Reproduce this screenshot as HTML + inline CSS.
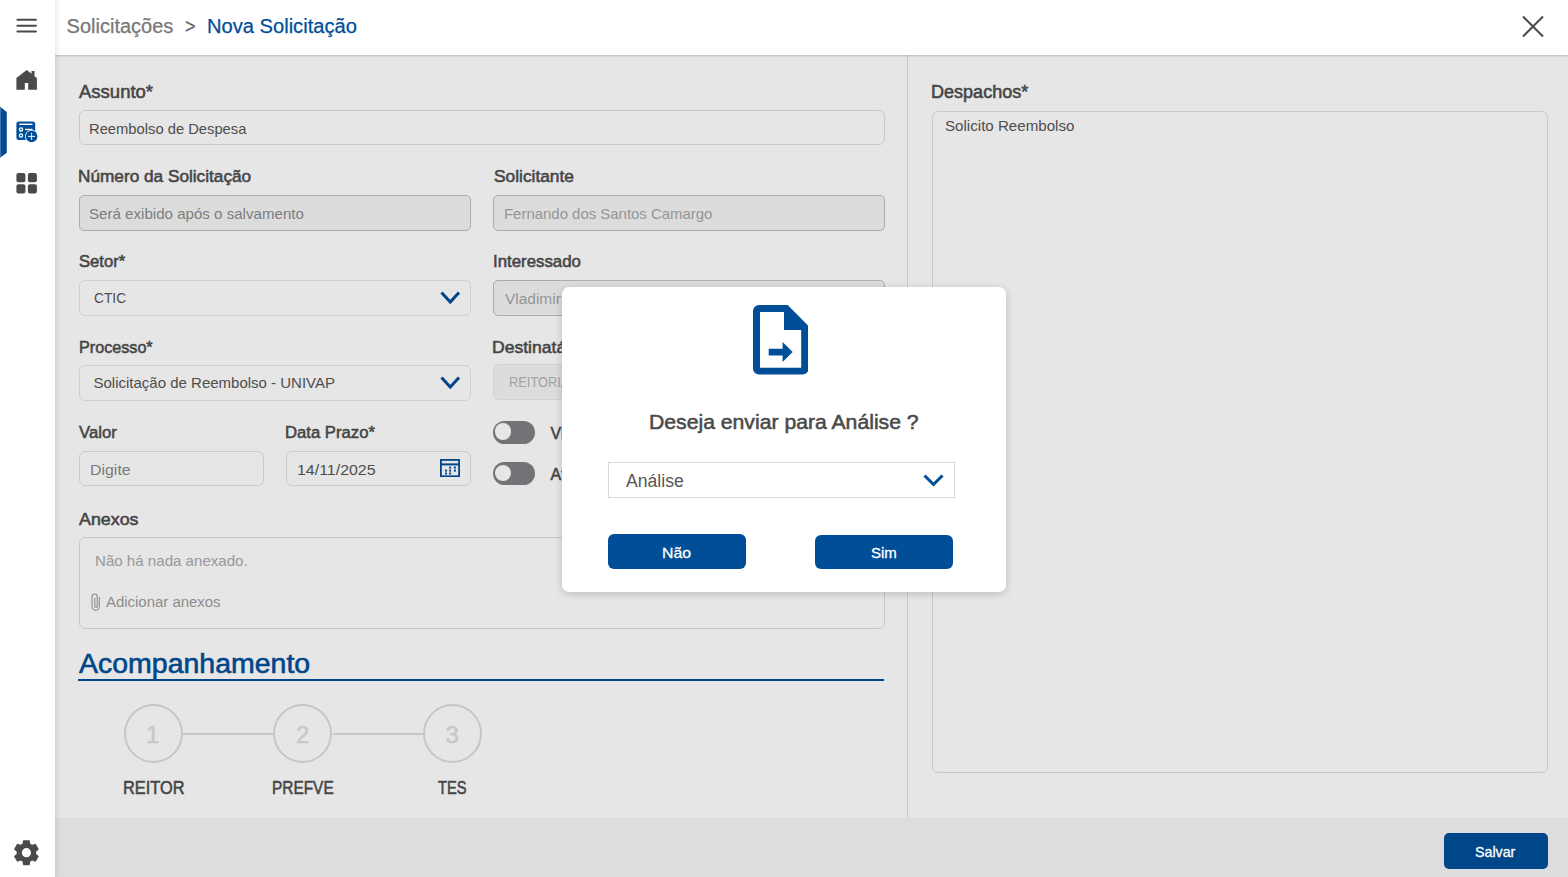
<!DOCTYPE html>
<html><head><meta charset="utf-8"><title>Nova Solicitação</title>
<style>
html,body{margin:0;padding:0;width:1568px;height:877px;overflow:hidden;background:#e6e6e6;}
body{position:relative;font-family:"Liberation Sans",sans-serif;}
.t{position:absolute;white-space:nowrap;transform-origin:0 0;}
.r{position:absolute;}
</style></head><body>
<div class="r" style="left:55px;top:55px;width:1513px;height:763px;background:#e6e6e6;"></div>
<div class="r" style="left:55px;top:818px;width:1513px;height:59px;background:#dddde0;"></div>
<div class="r" style="left:907px;top:54px;width:1.2px;height:764px;background:#cbcbcb;"></div>
<div class="r" style="left:55px;top:0px;width:1513px;height:55px;background:#fff;box-shadow:0 1px 2px rgba(0,0,0,.2);z-index:2;"></div>
<div class="r" style="left:0px;top:0px;width:55px;height:877px;background:#fff;box-shadow:1px 0 6px rgba(0,0,0,.12);z-index:3;"></div>
<div class="t" style="left:66.60px;top:14px;font-size:20px;line-height:24px;font-weight:400;color:#777;z-index:4;-webkit-text-stroke:0.25px #777;">Solicitações</div>
<div class="t" style="left:185.10px;top:14px;font-size:20px;line-height:24px;font-weight:400;color:#666;transform:scaleX(0.9000);z-index:4;-webkit-text-stroke:0.25px #666;">&gt;</div>
<div class="t" style="left:206.69px;top:14px;font-size:20px;line-height:24px;font-weight:400;color:#004e98;transform:scaleX(1.0061);z-index:4;-webkit-text-stroke:0.25px #004e98;">Nova Solicitação</div>
<svg class="r" style="left:1520px;top:14px;z-index:4" width="26" height="25" viewBox="0 0 26 25"><path d="M3 2.5 L23 22.5 M23 2.5 L3 22.5" stroke="#4a4a4a" stroke-width="2" fill="none"/></svg>
<svg class="r" style="left:0;top:0;z-index:5" width="55" height="877" viewBox="0 0 55 877"><g fill="#4a4a4a"><rect x="16.4" y="18.8" width="20.5" height="2" rx="1"/><rect x="16.4" y="24.7" width="20.5" height="2" rx="1"/><rect x="16.4" y="30.6" width="20.5" height="2" rx="1"/><path d="M26.7 69.9 L16.4 78.1 V89.8 H24.8 V82.9 H28.2 V89.8 H36.9 V78.1 L34.5 76.2 V71 H31.5 V73.8 Z"/><rect x="16.4" y="173" width="9" height="9.2" rx="2"/><rect x="27.9" y="173" width="9" height="9.2" rx="2"/><rect x="16.4" y="184.3" width="9" height="9.2" rx="2"/><rect x="27.9" y="184.3" width="9" height="9.2" rx="2"/></g><path d="M0 106.8 L6.8 112 V152.7 L0 157.8 Z" fill="#004a93"/><path d="M0 106.8 L1 107.5 V157.1 L0 157.8 Z" fill="#4573ad"/><g><clipPath id="fc"><rect x="16.4" y="121.5" width="18.8" height="18.5" rx="2.5"/></clipPath><rect x="16.4" y="121.5" width="18.8" height="18.5" rx="2.5" fill="#004e98"/><rect x="19.3" y="123.6" width="13.2" height="1.4" fill="#fff"/><circle cx="21" cy="129.4" r="1.6" fill="none" stroke="#fff" stroke-width="1.3"/><circle cx="21" cy="135.5" r="1.6" fill="none" stroke="#fff" stroke-width="1.3"/><rect x="25" y="128.8" width="7.5" height="1.3" fill="#fff"/><circle cx="31.6" cy="136.4" r="6.6" fill="#fff" clip-path="url(#fc)"/><circle cx="31.6" cy="136.4" r="5.8" fill="#004e98"/><path d="M31.6 132.8 V140 M28 136.4 H35.2" stroke="#fff" stroke-width="0.9"/></g><path fill="#4a4a4a" fill-rule="evenodd" d="M22.47 843.83 L23.20 840.20 L29.60 840.20 L30.33 843.83 A9.70 9.70 0 0 1 32.11 844.86 L35.62 843.68 L38.82 849.22 L36.05 851.67 A9.70 9.70 0 0 1 36.05 853.73 L38.82 856.18 L35.62 861.72 L32.11 860.54 A9.70 9.70 0 0 1 30.33 861.57 L29.60 865.20 L23.20 865.20 L22.47 861.57 A9.70 9.70 0 0 1 20.69 860.54 L17.18 861.72 L13.98 856.18 L16.75 853.73 A9.70 9.70 0 0 1 16.75 851.67 L13.98 849.22 L17.18 843.68 L20.69 844.86 A9.70 9.70 0 0 1 22.47 843.83 Z M26.40 848.10 A4.6 4.6 0 1 0 26.40 857.30 A4.6 4.6 0 1 0 26.40 848.10 Z"/></svg>
<div class="t" style="left:78.90px;top:81px;font-size:18px;line-height:22px;font-weight:400;color:#454545;transform:scaleX(1.0278);-webkit-text-stroke:0.55px #454545;">Assunto*</div>
<div class="r" style="left:79px;top:110px;width:806px;height:35px;border:1px solid #c9c9c9;border-radius:6px;box-sizing:border-box;"></div>
<div class="t" style="left:89.42px;top:120px;font-size:15px;line-height:18px;font-weight:400;color:#4d4d4d;transform:scaleX(0.9830);">Reembolso de Despesa</div>
<div class="t" style="left:78.19px;top:167px;font-size:17px;line-height:20px;font-weight:400;color:#454545;transform:scaleX(1.0124);-webkit-text-stroke:0.55px #454545;">Número da Solicitação</div>
<div class="r" style="left:79px;top:195px;width:392px;height:35.5px;border:1.5px solid #ababab;border-radius:5px;background:#dcdcdc;box-sizing:border-box;"></div>
<div class="t" style="left:89.19px;top:205px;font-size:15px;line-height:18px;font-weight:400;color:#7d7d7d;transform:scaleX(1.0066);">Será exibido após o salvamento</div>
<div class="t" style="left:493.50px;top:167px;font-size:17px;line-height:20px;font-weight:400;color:#454545;transform:scaleX(1.0192);-webkit-text-stroke:0.55px #454545;">Solicitante</div>
<div class="r" style="left:493px;top:195px;width:392px;height:35.5px;border:1.5px solid #ababab;border-radius:5px;background:#dcdcdc;box-sizing:border-box;"></div>
<div class="t" style="left:503.80px;top:205px;font-size:15px;line-height:18px;font-weight:400;color:#959595;transform:scaleX(0.9957);">Fernando dos Santos Camargo</div>
<div class="t" style="left:79.00px;top:252px;font-size:17px;line-height:20px;font-weight:400;color:#454545;transform:scaleX(0.9771);-webkit-text-stroke:0.55px #454545;">Setor*</div>
<div class="r" style="left:79px;top:280px;width:392px;height:36px;border:1px solid #cfcfcf;border-radius:6px;box-sizing:border-box;"></div>
<div class="t" style="left:93.78px;top:289px;font-size:15px;line-height:18px;font-weight:400;color:#4d4d4d;transform:scaleX(0.9182);">CTIC</div>
<svg class="r" style="left:438px;top:289px" width="24.5" height="16.5"><path d="M3.5 3.5 L12.25 13.0 L21.0 3.5" stroke="#004689" stroke-width="3" fill="none" stroke-linecap="butt"/></svg>
<div class="t" style="left:492.51px;top:252px;font-size:17px;line-height:20px;font-weight:400;color:#454545;transform:scaleX(0.9898);-webkit-text-stroke:0.55px #454545;">Interessado</div>
<div class="r" style="left:493px;top:280px;width:392px;height:35.5px;border:1.5px solid #ababab;border-radius:5px;background:#dcdcdc;box-sizing:border-box;"></div>
<div class="t" style="left:504.80px;top:290px;font-size:15px;line-height:18px;font-weight:400;color:#959595;transform:scaleX(1.0296);">Vladimir</div>
<div class="t" style="left:78.95px;top:338px;font-size:17px;line-height:20px;font-weight:400;color:#454545;transform:scaleX(0.9506);-webkit-text-stroke:0.55px #454545;">Processo*</div>
<div class="r" style="left:79px;top:365px;width:392px;height:36px;border:1px solid #cfcfcf;border-radius:6px;box-sizing:border-box;"></div>
<div class="t" style="left:93.50px;top:374px;font-size:15px;line-height:18px;font-weight:400;color:#4d4d4d;">Solicitação de Reembolso - UNIVAP</div>
<svg class="r" style="left:438px;top:374px" width="24.5" height="16.5"><path d="M3.5 3.5 L12.25 13.0 L21.0 3.5" stroke="#004689" stroke-width="3" fill="none" stroke-linecap="butt"/></svg>
<div class="t" style="left:492.47px;top:338px;font-size:17px;line-height:20px;font-weight:400;color:#454545;transform:scaleX(1.0333);-webkit-text-stroke:0.55px #454545;">Destinatário</div>
<div class="r" style="left:493px;top:364px;width:392px;height:35.7px;border:1px solid #d2d2d2;border-radius:5px;background:#dcdcdc;box-sizing:border-box;"></div>
<div class="t" style="left:508.84px;top:373px;font-size:15px;line-height:18px;font-weight:400;color:#a3a3a3;transform:scaleX(0.8551);">REITORIA</div>
<div class="t" style="left:79.10px;top:423px;font-size:17px;line-height:20px;font-weight:400;color:#454545;transform:scaleX(0.9821);-webkit-text-stroke:0.55px #454545;">Valor</div>
<div class="r" style="left:78.5px;top:451px;width:185.0px;height:35px;border:1px solid #cbcbcb;border-radius:6px;box-sizing:border-box;"></div>
<div class="t" style="left:89.74px;top:461px;font-size:15px;line-height:18px;font-weight:400;color:#7a7a7a;transform:scaleX(1.0595);">Digite</div>
<div class="t" style="left:285.12px;top:423px;font-size:17px;line-height:20px;font-weight:400;color:#454545;transform:scaleX(0.9813);-webkit-text-stroke:0.55px #454545;">Data Prazo*</div>
<div class="r" style="left:286px;top:450.5px;width:184.5px;height:35.5px;border:1px solid #cbcbcb;border-radius:6px;box-sizing:border-box;"></div>
<div class="t" style="left:296.94px;top:461px;font-size:15px;line-height:18px;font-weight:400;color:#4d4d4d;transform:scaleX(1.0625);">14/11/2025</div>
<svg class="r" style="left:440px;top:458.6px" width="20" height="18.2" viewBox="0 0 20 18.2"><rect x="0.9" y="0.9" width="18.2" height="16.4" fill="none" stroke="#004689" stroke-width="1.8"/><rect x="0.9" y="4.4" width="18.2" height="2" fill="#004689"/><g fill="#004689"><rect x="9.1" y="7.6" width="2" height="2"/><rect x="13.9" y="7.6" width="2" height="2"/><rect x="5" y="10.6" width="2" height="2"/><rect x="9.1" y="10.6" width="2" height="2"/><rect x="13.9" y="10.6" width="2" height="2"/><rect x="5" y="13.5" width="2" height="2"/><rect x="9.1" y="13.5" width="2" height="2"/></g></svg>
<div class="r" style="left:492.7px;top:420.5px;width:42.5px;height:23.2px;background:#727377;border-radius:12px;"></div>
<div class="r" style="left:494.7px;top:423.4px;width:16.5px;height:16.5px;background:#e6e6e6;border-radius:50%;"></div>
<div class="r" style="left:492.7px;top:462px;width:42.5px;height:23.2px;background:#727377;border-radius:12px;"></div>
<div class="r" style="left:494.7px;top:464.9px;width:16.5px;height:16.5px;background:#e6e6e6;border-radius:50%;"></div>
<div class="t" style="left:550.50px;top:424px;font-size:16px;line-height:19px;font-weight:400;color:#454545;-webkit-text-stroke:0.55px #454545;">Visível</div>
<div class="t" style="left:550.50px;top:465px;font-size:16px;line-height:19px;font-weight:400;color:#454545;-webkit-text-stroke:0.55px #454545;">Ativo</div>
<div class="t" style="left:78.80px;top:510px;font-size:17px;line-height:20px;font-weight:400;color:#454545;transform:scaleX(1.0491);-webkit-text-stroke:0.55px #454545;">Anexos</div>
<div class="r" style="left:79px;top:536.5px;width:806px;height:92.0px;border:1px solid #c9c9c9;border-radius:6px;box-sizing:border-box;"></div>
<div class="t" style="left:95.29px;top:552px;font-size:15px;line-height:18px;font-weight:400;color:#989898;transform:scaleX(1.0060);">Não há nada anexado.</div>
<svg class="r" style="left:91px;top:593px" width="10" height="19" viewBox="0 0 10 19"><path d="M8.3 4 V13.6 A3.65 3.65 0 0 1 1 13.6 V3.6 A2.6 2.6 0 0 1 6.2 3.6 V13.2 A1.2 1.2 0 0 1 3.8 13.2 V5" stroke="#8d8d8d" stroke-width="1.1" fill="none"/></svg>
<div class="t" style="left:106.40px;top:593px;font-size:15px;line-height:18px;font-weight:400;color:#8d8d8d;transform:scaleX(0.9957);">Adicionar anexos</div>
<div class="t" style="left:79.10px;top:648px;font-size:27px;line-height:32px;font-weight:400;color:#004689;transform:scaleX(1.0550);-webkit-text-stroke:0.6px #004689;">Acompanhamento</div>
<div class="r" style="left:78px;top:679.3px;width:806px;height:2.2px;background:#004689;"></div>
<div class="r" style="left:182.5px;top:732.7px;width:91.0px;height:2.0px;background:#c6c6c6;"></div>
<div class="r" style="left:332.5px;top:732.7px;width:91.0px;height:2.0px;background:#c6c6c6;"></div>
<div class="r" style="left:123.5px;top:704.2px;width:59.2px;height:59.2px;border:2px solid #c6c6c6;border-radius:50%;box-sizing:border-box;"></div>
<div class="t" style="left:146.10px;top:720px;font-size:24px;line-height:29px;font-weight:400;color:#c8c8c8;-webkit-text-stroke:0.6px #c8c8c8;">1</div>
<div class="t" style="left:122.89px;top:777px;font-size:18px;line-height:22px;font-weight:400;color:#454545;transform:scaleX(0.9091);-webkit-text-stroke:0.55px #454545;">REITOR</div>
<div class="r" style="left:273.29999999999995px;top:704.2px;width:59.2px;height:59.2px;border:2px solid #c6c6c6;border-radius:50%;box-sizing:border-box;"></div>
<div class="t" style="left:295.90px;top:720px;font-size:24px;line-height:29px;font-weight:400;color:#c8c8c8;-webkit-text-stroke:0.6px #c8c8c8;">2</div>
<div class="t" style="left:271.84px;top:777px;font-size:18px;line-height:22px;font-weight:400;color:#454545;transform:scaleX(0.8563);-webkit-text-stroke:0.55px #454545;">PREFVE</div>
<div class="r" style="left:423.0px;top:704.2px;width:59.2px;height:59.2px;border:2px solid #c6c6c6;border-radius:50%;box-sizing:border-box;"></div>
<div class="t" style="left:445.60px;top:720px;font-size:24px;line-height:29px;font-weight:400;color:#c8c8c8;-webkit-text-stroke:0.6px #c8c8c8;">3</div>
<div class="t" style="left:438.00px;top:777px;font-size:18px;line-height:22px;font-weight:400;color:#454545;transform:scaleX(0.8143);-webkit-text-stroke:0.55px #454545;">TES</div>
<div class="t" style="left:931.10px;top:81px;font-size:18px;line-height:22px;font-weight:400;color:#454545;-webkit-text-stroke:0.55px #454545;">Despachos*</div>
<div class="r" style="left:931.5px;top:110.5px;width:616.5px;height:662.0px;border:1px solid #c9c9c9;border-radius:6px;box-sizing:border-box;"></div>
<div class="t" style="left:944.69px;top:117px;font-size:15px;line-height:18px;font-weight:400;color:#4d4d4d;transform:scaleX(1.0079);">Solicito Reembolso</div>
<div class="r" style="left:1443.5px;top:832.5px;width:104.5px;height:36.0px;background:#00478a;border-radius:5px;"></div>
<div class="t" style="left:1474.85px;top:843px;font-size:15px;line-height:18px;font-weight:400;color:#fff;transform:scaleX(0.9476);-webkit-text-stroke:0.3px #fff;">Salvar</div>
<div class="r" style="left:562px;top:287.3px;width:444px;height:304.7px;background:#fff;border-radius:7px;box-shadow:0 2px 8px rgba(0,0,0,.18);z-index:10;"></div>
<svg class="r" style="left:752.8px;top:305px;z-index:11" width="55.6" height="69.6" viewBox="0 0 55.6 69.6"><path fill="#004e98" fill-rule="evenodd" d="M6 0 H34.7 L55.6 21 V63.6 A6 6 0 0 1 49.6 69.6 H6 A6 6 0 0 1 0 63.6 V6 A6 6 0 0 1 6 0 Z M7 7 V62.8 H48.2 V24.9 H31 V7 Z"/><path fill="#004e98" d="M15.7 43.7 H29.6 V36.9 L39.7 47.1 L29.6 57.1 V50.6 H15.7 Z"/></svg>
<div class="t" style="left:649.39px;top:409px;font-size:21px;line-height:25px;font-weight:400;color:#4a4a4a;transform:scaleX(1.0086);z-index:11;-webkit-text-stroke:0.55px #4a4a4a;">Deseja enviar para Análise ?</div>
<div class="r" style="left:608.2px;top:462px;width:346.4px;height:35.5px;border:1px solid #d9d9d9;box-sizing:border-box;z-index:11;"></div>
<div class="t" style="left:625.70px;top:470px;font-size:18px;line-height:22px;font-weight:400;color:#555;transform:scaleX(0.9776);z-index:11;">Análise</div>
<svg class="r" style="left:921.2px;top:471.5px;z-index:11" width="25" height="16"><path d="M3.5 3.5 L12.5 12.5 L21.5 3.5" stroke="#004e98" stroke-width="3" fill="none"/></svg>
<div class="r" style="left:608px;top:534.3px;width:137.7px;height:34.3px;background:#004e98;border-radius:6px;z-index:11;"></div>
<div class="t" style="left:662.15px;top:544px;font-size:15px;line-height:18px;font-weight:400;color:#fff;transform:scaleX(1.0538);z-index:12;-webkit-text-stroke:0.3px #fff;">Não</div>
<div class="r" style="left:815.2px;top:534.5px;width:137.7px;height:34.3px;background:#004e98;border-radius:6px;z-index:11;"></div>
<div class="t" style="left:870.90px;top:544px;font-size:15px;line-height:18px;font-weight:400;color:#fff;z-index:12;-webkit-text-stroke:0.3px #fff;">Sim</div>
</body></html>
